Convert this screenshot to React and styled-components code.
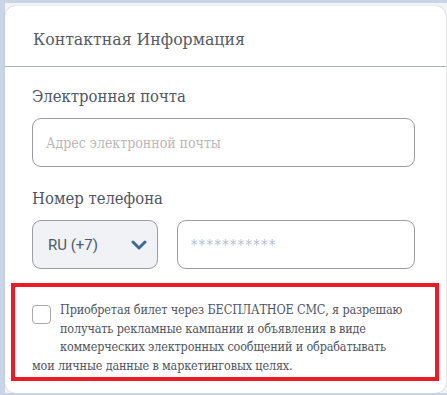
import React, { useState } from 'react'
import styled, { createGlobalStyle } from 'styled-components'

const serif = `"DejaVu Serif Condensed", "DejaVu Serif", serif`

const Global = createGlobalStyle`
  body {
    margin: 0;
    background: #c9d4e4;
    font-family: ${serif};
  }
`

function App() {
  const [checked, setChecked] = useState(false)

  return (
    <>
      <Global />
      <Page>
        <Card>
          <Header>Контактная Информация</Header>
          <Fields>
            <Label>Электронная почта</Label>
            <TextInput type="email" placeholder="Адрес электронной почты" />
            <Label spaced>Номер телефона</Label>
            <PhoneRow>
              <Select>
                <span>RU (+7)</span>
                <svg width="16" height="10" viewBox="0 0 16 10">
                  <polyline points="2,2 8,8 14,2" fill="none" stroke="#3d6b98" strokeWidth="3" strokeLinecap="round" strokeLinejoin="round" />
                </svg>
              </Select>
              <TextInput type="tel" placeholder="***********" stars grow />
            </PhoneRow>
          </Fields>
          <Consent>
            <Check checked={checked} onClick={() => setChecked(!checked)} />
            Приобретая билет через БЕСПЛАТНОЕ СМС, я разрешаю получать рекламные кампании и объявления в виде коммерческих электронных сообщений и обрабатывать<br />
            мои личные данные в маркетинговых целях.
          </Consent>
        </Card>
      </Page>
    </>
  )
}

export default App

const Page = styled.div`
  margin: 3px 0 0 5px;
  padding-top: 3px;
  background: #f2f3f5;
`

const Card = styled.div`
  width: 441px;
  background: #fff;
  border-radius: 10px;
  box-shadow: 0 0 1px rgba(0, 0, 0, 0.35);
  padding-bottom: 12px;
`

const Header = styled.div`
  padding: 22px 28px 15px;
  font-family: ${serif};
  font-size: 17.5px;
  line-height: 23px;
  color: #555b66;
  border-bottom: 1px solid #aab4bc;
`

const Fields = styled.div`
  display: flex;
  flex-direction: column;
  padding: 20px 31px 0 27px;
`

const Label = styled.div`
  font-family: ${serif};
  font-size: 16.5px;
  line-height: 20px;
  color: #505663;
  margin-top: ${p => (p.spaced ? '22px' : '0')};
  margin-bottom: 11px;
`

const TextInput = styled.input`
  box-sizing: border-box;
  flex: ${p => (p.grow ? '1 1 0' : 'none')};
  height: 49px;
  min-width: 0;
  margin: 0;
  border: 1px solid #9c9c9c;
  border-radius: 9px;
  padding: 0 13px;
  font-family: ${serif};
  font-size: 14px;
  outline: none;
  &::placeholder {
    color: ${p => (p.stars ? '#b3bfcc' : '#b8b8b8')};
    letter-spacing: ${p => (p.stars ? '1.5px' : '0')};
  }
`

const PhoneRow = styled.div`
  display: flex;
  gap: 19px;
`

const Select = styled.div`
  box-sizing: border-box;
  flex: 0 0 126px;
  height: 49px;
  display: flex;
  align-items: center;
  justify-content: space-between;
  padding: 0 10px 0 15px;
  background: #f0f2f5;
  border: 1px solid #9c9c9c;
  border-radius: 9px;
  font-family: Roboto, "Liberation Sans", sans-serif;
  font-size: 15px;
  color: #4b5a6b;
`

const Consent = styled.div`
  margin: 14px 7px 0 6px;
  border: 4px solid #ed1c24;
  padding: 14px 18px 2px 17px;
  font-family: ${serif};
  font-size: 12.5px;
  letter-spacing: -0.15px;
  line-height: 18.5px;
  color: #4f5564;
`

const Check = styled.span`
  float: left;
  box-sizing: border-box;
  width: 19px;
  height: 19px;
  margin: 4px 9px 20px 0;
  border: 1px solid #a8a8a8;
  border-radius: 4px;
  background: ${p => (p.checked ? '#3d6b98' : '#fff')};
  cursor: pointer;
`
